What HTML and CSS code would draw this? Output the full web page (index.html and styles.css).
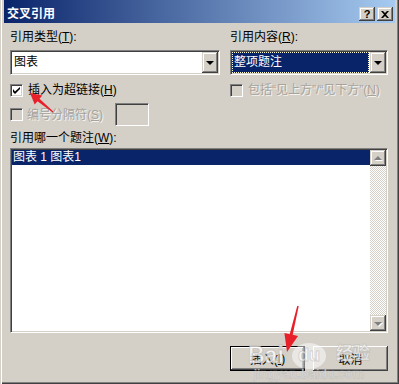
FILE: index.html
```html
<!DOCTYPE html>
<html lang="zh-CN">
<head>
  <meta charset="UTF-8">
  <title>交叉引用</title>
  <link rel="stylesheet" href="styles.css">
</head>
<body>
  <div class="window">
    <div class="titlebar">
      <span class="title">交叉引用</span>
      <div class="tb-buttons">
        <span class="tb-btn">?</span>
        <span class="tb-btn">
          <svg width="8" height="7" viewBox="0 0 8 7"><path d="M0 0h2l2 2 2-2h2L5 3.5 8 7H6L4 5 2 7H0l3-3.5z" fill="#000"/></svg>
        </span>
      </div>
    </div>

    <div class="content">
      <!-- 两个下拉框 -->
      <div class="top-row">
        <div class="left-col">
          <div class="label">引用类型(<u>T</u>):</div>
          <div class="combo">
            <span class="combo-text">图表</span>
            <span class="drop"><i class="arrow-down"></i></span>
          </div>
        </div>
        <div class="right-col">
          <div class="label">引用内容(<u>R</u>):</div>
          <div class="combo">
            <span class="combo-text selected">整项题注</span>
            <span class="drop"><i class="arrow-down"></i></span>
          </div>
        </div>
      </div>

      <!-- 复选框 -->
      <div class="opts-row">
        <div class="left-col">
          <div class="check">
            <span class="box">
              <svg width="7" height="7" viewBox="0 0 7 7"><path d="M0 2v3l2 2 5-5V-0L2 4.5z" fill="#000"/></svg>
            </span>
            <span>插入为超链接(<u>H</u>)</span>
          </div>
          <div class="check disabled sep-row">
            <span class="box"></span>
            <span>编号分隔符(<u>S</u>)</span>
            <span class="sep-input"></span>
          </div>
        </div>
        <div class="right-col">
          <div class="check disabled">
            <span class="box"></span>
            <span>包括“见上方”/“见下方”(<u>N</u>)</span>
          </div>
        </div>
      </div>

      <div class="label list-label">引用哪一个题注(<u>W</u>):</div>
      <div class="listbox">
        <div class="list-items">
          <div class="list-item active">图表 1 图表1</div>
        </div>
        <div class="scrollbar">
          <span class="sb-btn"><i class="arrow-up"></i></span>
          <span class="sb-track"></span>
          <span class="sb-btn"><i class="arrow-down gray"></i></span>
        </div>
      </div>

      <div class="buttons">
        <span class="btn default">插入(<u>I</u>)</span>
        <span class="btn">取消</span>
      </div>
    </div>

    <!-- 水印 -->
    <div class="watermark">
      <span class="wm-bai">Bai</span>
      <span class="wm-paw">du</span>
      <span class="wm-jy">经验</span>
      <span class="wm-url">jingyan.baidu.com</span>
    </div>

    <!-- 红色箭头标注 -->
    <svg class="marks" width="399" height="384" viewBox="0 0 399 384">
      <polygon points="30,93 42.3,95.4 39.5,98.8 53.3,111.6 52.7,112.4 37.5,101.2 34.7,104.6" fill="#e8202a"/>
      <polygon points="287,352 298,336.1 292.7,334.8 298.7,306.2 297.3,305.8 289.7,334.2 284.4,332.9" fill="#e8202a"/>
    </svg>
  </div>
</body>
</html>
```

FILE: styles.css
```css
/* reset */
body{
  margin: 0;
  font-family: "Liberation Sans", "Noto Sans CJK SC", sans-serif;
  font-size: 12px;
  color: #000;
}
u{
  text-decoration: underline;
  text-underline-offset: 1px;
}

/* 窗口外框 */
.window{
  position: relative;
  width: 399px;
  height: 384px;
  box-sizing: border-box;
  padding: 0 4px 4px;
  background: #d4d0c8;
  box-shadow: inset 1px 0 #d4d0c8, inset 2px 0 #fff, inset -1px -1px #404040, inset -2px -2px #808080;
  overflow: hidden;
}

/* 标题栏 */
.titlebar{
  height: 23px;
  box-sizing: border-box;
  padding: 5px 2px 0 3px;
  display: flex;
  align-items: center;
  justify-content: space-between;
  background: linear-gradient(to right, #0a246a, #a6caf0);
  color: #fff;
}
.title{
  font-weight: bold;
  font-size: 12px;
  line-height: 14px;
}
.tb-buttons{
  display: flex;
  gap: 2px;
}
.tb-btn{
  width: 16px;
  height: 14px;
  display: flex;
  align-items: center;
  justify-content: center;
  background: #d4d0c8;
  color: #000;
  font: bold 11px "Liberation Sans", sans-serif;
  box-shadow: inset -1px -1px #404040, inset 1px 1px #d4d0c8, inset -2px -2px #808080, inset 2px 2px #fff;
}

/* 内容区 */
.content{
  padding: 7px 7px 0 6px;
}
.label{
  line-height: 14px;
  height: 14px;
}
.top-row, .opts-row{
  display: flex;
  gap: 10px;
}
.left-col{
  width: 210px;
}
.right-col{
  width: 158px;
}

/* 下拉框 */
.combo{
  margin-top: 6px;
  height: 25px;
  box-sizing: border-box;
  display: flex;
  background: #fff;
  border: 1px solid;
  border-color: #808080 #fff #fff #808080;
  box-shadow: inset 1px 1px #404040, inset -1px -1px #d4d0c8;
  padding: 1px;
}
.combo-text{
  flex: 1;
  line-height: 21px;
  padding-left: 2px;
}
.combo-text.selected{
  margin: 0 1px 0 0;
  line-height: 19px;
  background: #0a246a;
  color: #fff;
  border: 1px dotted #fffbd0;
  padding-left: 1px;
}
.drop{
  width: 16px;
  display: flex;
  align-items: center;
  justify-content: center;
  background: #d4d0c8;
  box-shadow: inset -1px -1px #404040, inset 1px 1px #d4d0c8, inset -2px -2px #808080, inset 2px 2px #fff;
}
.arrow-down{
  width: 0;
  height: 0;
  border-left: 4px solid transparent;
  border-right: 4px solid transparent;
  border-top: 4px solid #000;
  margin-top: 1px;
}
.arrow-up{
  width: 0;
  height: 0;
  border-left: 4px solid transparent;
  border-right: 4px solid transparent;
  border-bottom: 4px solid #808080;
  filter: drop-shadow(1px 1px 0 #fff);
}
.arrow-down.gray{
  border-top-color: #808080;
  filter: drop-shadow(1px 1px 0 #fff);
}

/* 复选框 */
.opts-row{
  margin-top: 8px;
}
.check{
  display: flex;
  align-items: center;
  line-height: 14px;
  height: 14px;
  gap: 5px;
}
.box{
  width: 13px;
  height: 13px;
  box-sizing: border-box;
  display: flex;
  align-items: center;
  justify-content: center;
  background: #fff;
  border: 1px solid;
  border-color: #808080 #fff #fff #808080;
  box-shadow: inset 1px 1px #404040, inset -1px -1px #d4d0c8;
}
.check.disabled{
  color: #a6a39c;
  text-shadow: 1px 1px 0 #f4f3ef;
}
.check.disabled .box{
  background: #d4d0c8;
}
.sep-row{
  height: 23px;
  margin-top: 6px;
  gap: 4px;
}
.sep-input{
  width: 34px;
  height: 23px;
  box-sizing: border-box;
  margin-left: 8px;
  border: 1px solid;
  border-color: #808080 #fff #fff #808080;
  box-shadow: inset 1px 1px #404040, inset -1px -1px #d4d0c8;
}

/* 列表框 */
.list-label{
  margin-top: 5px;
}
.listbox{
  margin-top: 3px;
  height: 185px;
  box-sizing: border-box;
  display: flex;
  background: #fff;
  border: 1px solid;
  border-color: #808080 #fff #fff #808080;
  box-shadow: inset 1px 1px #404040, inset -1px -1px #d4d0c8;
  padding: 1px;
}
.list-items{
  flex: 1;
}
.list-item{
  line-height: 15px;
  padding-left: 1px;
}
.list-item.active{
  background: #0a246a;
  color: #fff;
}
.scrollbar{
  width: 16px;
  display: flex;
  flex-direction: column;
}
.sb-btn{
  height: 16px;
  display: flex;
  align-items: center;
  justify-content: center;
  background: #d4d0c8;
  box-shadow: inset -1px -1px #404040, inset 1px 1px #d4d0c8, inset -2px -2px #808080, inset 2px 2px #fff;
}
.sb-track{
  flex: 1;
  background: conic-gradient(#fff 25%, #d4d0c8 0 50%, #fff 0 75%, #d4d0c8 0);
  background-size: 2px 2px;
}

/* 底部按钮 */
.buttons{
  margin-top: 13px;
  display: flex;
  justify-content: flex-end;
  gap: 8px;
}
.btn{
  width: 75px;
  height: 25px;
  box-sizing: border-box;
  display: flex;
  align-items: center;
  justify-content: center;
  background: #d4d0c8;
  box-shadow: inset -1px -1px #404040, inset 1px 1px #fff, inset -2px -2px #808080, inset 2px 2px #d4d0c8;
}
.btn.default{
  border: 1px solid #000;
  box-shadow: inset -1px -1px #404040, inset 1px 1px #fff, inset -2px -2px #808080;
}

/* 水印 */
.watermark{
  position: absolute;
  left: 248px;
  top: 330px;
  width: 150px;
  height: 54px;
  color: rgba(255, 255, 255, 0.75);
  pointer-events: none;
}
.watermark span{
  position: absolute;
  -webkit-text-stroke: 1px rgba(160, 160, 160, 0.4);
}
.wm-bai{
  left: 0;
  top: 12px;
  font: bold 23px "Liberation Sans", sans-serif;
}
.wm-paw{
  left: 44px;
  top: 13px;
  width: 34px;
  height: 26px;
  border-radius: 50%;
  background: rgba(255, 255, 255, 0.5);
  text-align: center;
  font: bold 18px/24px "Liberation Sans", sans-serif;
}
.wm-jy{
  left: 88px;
  top: 12px;
  font: bold 17px/20px "Noto Sans CJK SC", sans-serif;
}
.wm-url{
  left: 6px;
  top: 36px;
  font: 13px/16px "Liberation Sans", sans-serif;
  letter-spacing: 0.3px;
}

/* 红色箭头 */
.marks{
  position: absolute;
  left: 0;
  top: 0;
  pointer-events: none;
}
```
